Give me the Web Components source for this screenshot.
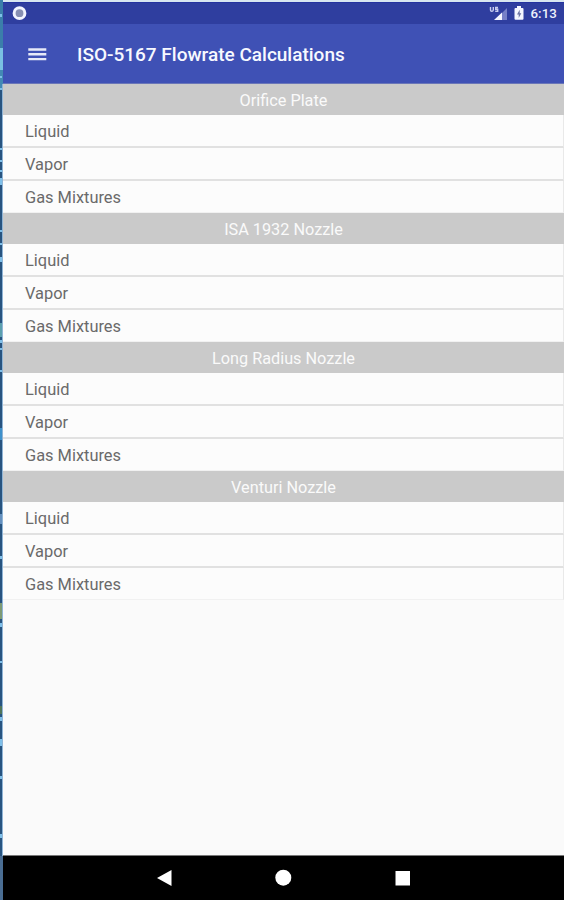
<!DOCTYPE html>
<html lang="en">
<head>
<meta charset="utf-8">
<title>ISO-5167 Flowrate Calculations</title>
<style>
html,body{margin:0;height:100%;overflow:hidden}
body{font-family:Roboto,"Liberation Sans",sans-serif}
</style>
</head>
<body>
<flow-app></flow-app>
<script>
const define = (name, html) => customElements.define(name, class extends HTMLElement {
  constructor() {
    super();
    const t = document.createElement('template');
    t.innerHTML = html;
    this.attachShadow({mode: 'open'}).append(t.content.cloneNode(true));
  }
});

define('desktop-edge', `<style>
:host{display:block;background:#21507f}svg{display:block}
</style>
<svg width="3" height="900" viewBox="0 0 3 900">
<rect width="3" height="900" fill="#285480"/>
<rect y="0" width="3" height="48" fill="#3b7eaa"/>
<rect y="48" width="3" height="22" fill="#79bfe2"/>
<rect y="70" width="3" height="20" fill="#4389b4"/>
<g fill="#7ebfe9"><path d="M0 14h2v3H0zM0 76h2v2H0zM0 88h2v2H0zM0 148h2v2H0zM0 160h2v2H0zM0 170h2v2H0zM0 178h3v7H0zM0 230h2v2H0zM0 243h2v2H0zM0 257h2v5H0zM0 340h2v3H0zM0 348h2v2H0zM0 370h2v2H0zM0 436h2v3H0zM0 556h2v3H0zM0 623h2v4H0zM0 661h2v2H0zM0 717h2v4H0zM0 739h2v7H0zM0 776h2v3H0zM0 834h2v4H0z"/></g>
<path d="M0 323h2v14H0z" fill="#5b9fae"/><path d="M0 428h2v12H0z" fill="#3f91cb"/>
<path d="M0 514h2v10H0z" fill="#6490bf"/><path d="M0 603h2v16H0z" fill="#7d9a74"/>
<path d="M0 706h2v8H0z" fill="#50755a"/><path d="M0 856h3v44H0z" fill="#4a6d93"/>
<path d="M2 84h1v772h-1z" fill="#8fb4d6"/>
</svg>`);

define('status-bar', `<style>
:host{display:flex;box-sizing:border-box;height:22px;align-items:center;background:#2f3e9f;border-top:1px solid #2433a0;padding:0 7px 0 9px;color:#eef1fc}
svg{display:block}.gap{flex:1}.time{font-size:13.300px;font-weight:500;line-height:20px;letter-spacing:.1px}
.sig{margin-right:6px}.bat{margin-right:6px}
</style>
<svg width="15" height="16" viewBox="0 0 15 16"><circle cx="7.500" cy="7.200" r="5.400" fill="#8790b3" stroke="#f2f5ff" stroke-width="3"/></svg>
<span class="gap"></span>
<svg class="sig" width="19" height="18" viewBox="0 0 19 18"><path d="M18 3v12h-5V8z" fill="#7680c7"/><path d="M13 7.500V15H5z" fill="#f4f6ff"/><path d="M1.500 2v3q0 1.300 1.300 1.300T4.300 5V2M9 2.500H6.700v1.700h2v2H6.200" fill="none" stroke="#c7cdf0" stroke-width="1.400"/></svg>
<svg class="bat" width="10" height="18" viewBox="0 0 10 18"><path d="M3 1h4v2h1.500q1 0 1 1v9.800q0 1-1 1h-7q-1 0-1-1V4q0-1 1-1H3z" fill="#f4f6ff"/><path d="M5.700 4.800 3 9.600h1.700v3.500L7.300 8.300H5.700z" fill="#6b73a3"/></svg>
<span class="time">6:13</span>`);

define('app-bar', `<style>
:host{display:flex;box-sizing:border-box;height:60px;align-items:center;padding:2px 0 0 23px;background:#3f51b5;border-bottom:1px solid #6a76b8;color:#f7f9ff}
svg{display:block;margin-right:30px}
.t{font-size:19px;font-weight:500;line-height:24px;white-space:nowrap}
</style>
<svg width="21" height="16" viewBox="0 0 21 16"><path d="M2.300 2.500h18M2.300 7.300h18M2.300 12.100h18" stroke="#e6e9f8" stroke-width="2.400"/></svg>
<span class="t"><slot></slot></span>`);

define('list-row', `<style>
:host{display:block;box-sizing:border-box;height:33px;padding:1px 0 0 22px;font-size:16.400px;line-height:32px;color:#6a6a6a;background:#fcfcfc;border-bottom:2px solid #e1e1e1;border-right:1px solid #e9e9e9}
:host([last]){height:32px;border-bottom:1px solid #f1f1f1}
</style><slot></slot>`);

define('calc-group', `<style>
:host{display:block;height:129.100px}
.h{box-sizing:border-box;height:31px;padding-top:1px;background:#cacaca;color:#fafafa;font-size:16.250px;line-height:31px;text-align:center}
</style>
<div class="h"><slot></slot></div>
<list-row>Liquid</list-row><list-row>Vapor</list-row><list-row last>Gas Mixtures</list-row>`);

define('nav-bar', `<style>
:host{display:flex;box-sizing:border-box;height:45px;background:#000;border-top:1px solid #777;align-items:center;padding-left:154px;gap:102px}
svg{display:block}
</style>
<svg width="16" height="18" viewBox="0 0 16 18"><path d="M0 9 14.500 1v16z" fill="#fff"/></svg>
<svg width="17" height="18" viewBox="0 0 17 18"><circle cx="8.300" cy="8.700" r="8" fill="#fff"/></svg>
<svg width="17" height="18" viewBox="0 0 17 18"><path d="M1.500 2H16v14.500H1.500z" fill="#fff"/></svg>`);

define('flow-app', `<style>
:host{display:grid;grid-template-columns:3px 1fr;height:900px;overflow:hidden}
.screen{display:flex;flex-direction:column;height:900px;box-sizing:border-box;border-top:2px solid #d8e6f0;background:#fafafa}
main{flex:1;min-height:0}
</style>
<desktop-edge></desktop-edge>
<div class="screen">
<status-bar></status-bar>
<app-bar>ISO-5167 Flowrate Calculations</app-bar>
<main>
<calc-group>Orifice Plate</calc-group><calc-group>ISA 1932 Nozzle</calc-group><calc-group>Long Radius Nozzle</calc-group><calc-group>Venturi Nozzle</calc-group>
</main>
<nav-bar></nav-bar>
</div>`);
</script>
</body>
</html>
